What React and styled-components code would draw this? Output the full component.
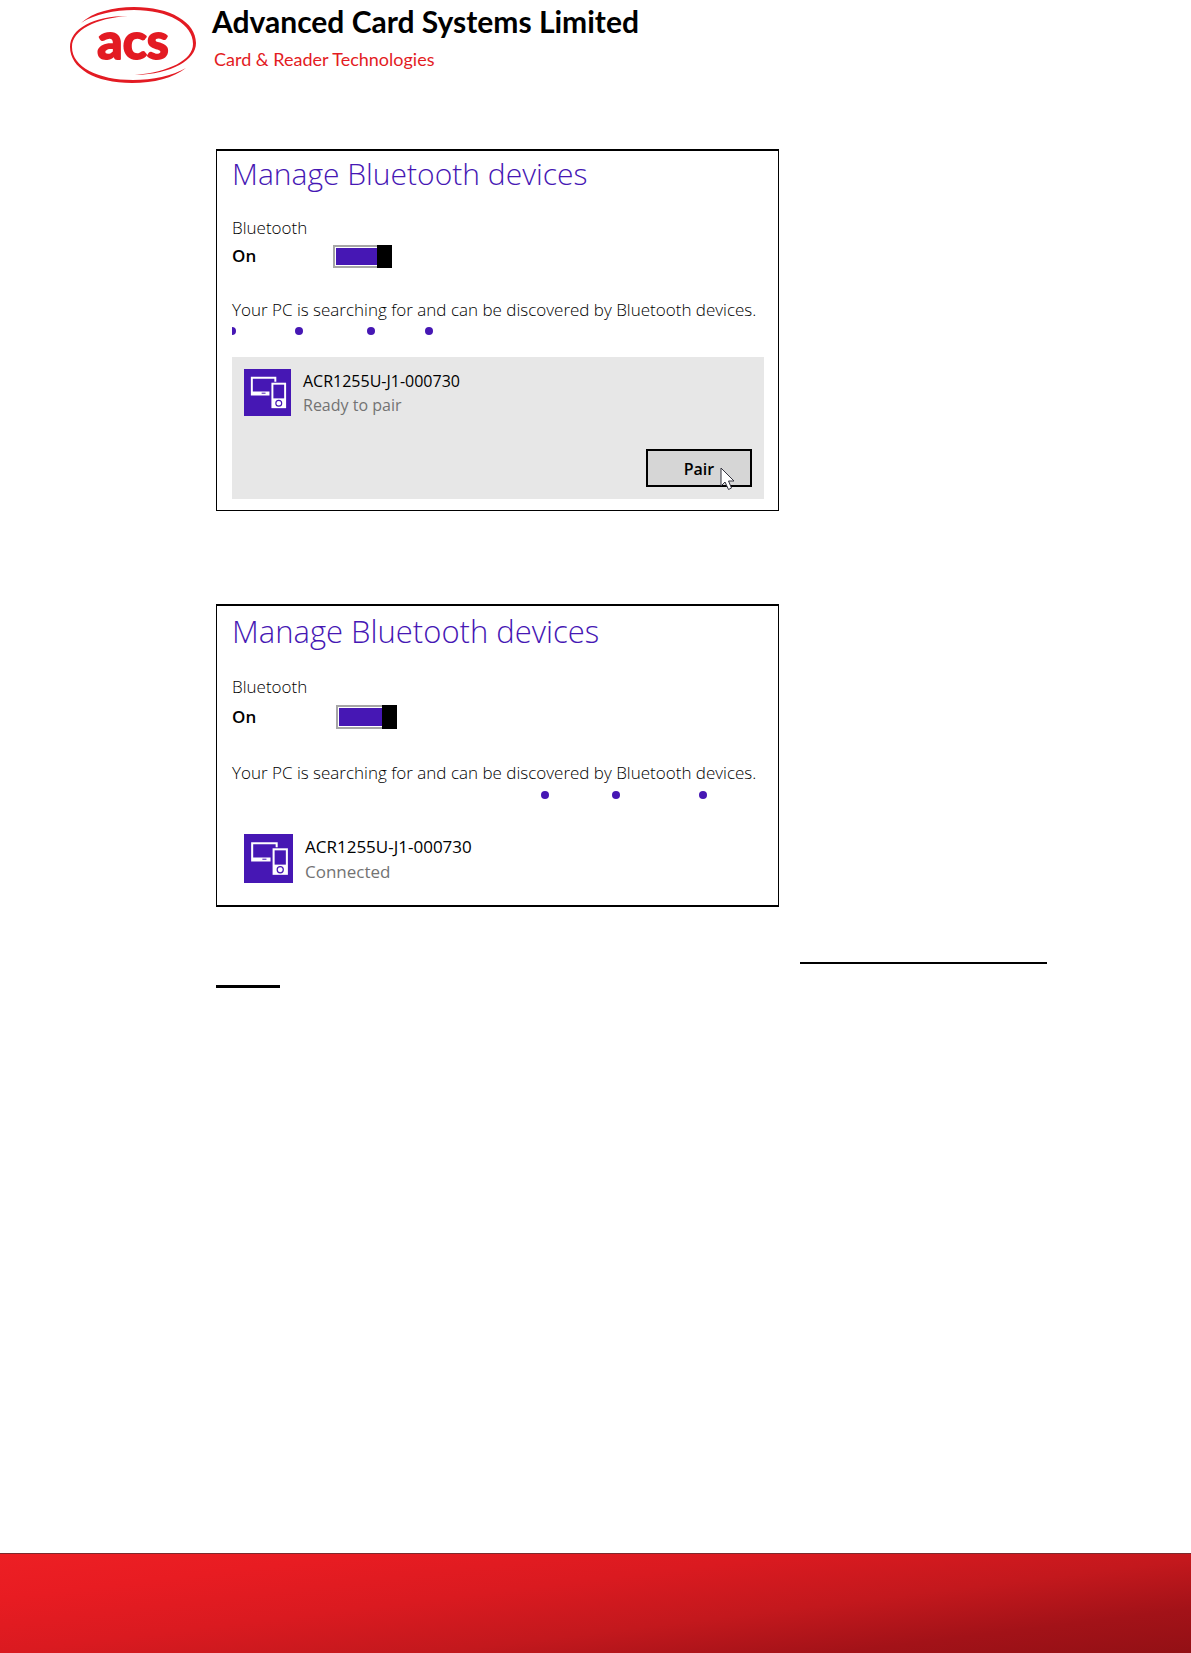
import React, { useState } from "react";
import styled, { createGlobalStyle } from "styled-components";

const GlobalStyle = createGlobalStyle`
  * {
    box-sizing: border-box;
  }
  body {
    margin: 0;
    background: #ffffff;
    font-family: "Open Sans", "Noto Sans", sans-serif;
  }
`;

const Page = styled.div`
  display: flex;
  flex-direction: column;
  min-height: 100vh;
`;

const Header = styled.header`
  display: flex;
  gap: 16px;
  height: 149px;
  padding-left: 68px;
`;

const Logo = styled.svg`
  flex: none;
  width: 128px;
  height: 90px;
`;

const LogoText = styled.text`
  font-family: Lato, sans-serif;
  font-size: 50px;
  font-weight: bold;
`;

const Company = styled.div`
  display: flex;
  flex-direction: column;
`;

const CompanyName = styled.h1`
  margin: 0;
  font-family: Lato, sans-serif;
  font-size: 30px;
  line-height: 42px;
  font-weight: bold;
  color: #000000;
`;

const Tagline = styled.p`
  margin: 0;
  padding: 5px 0 0 2px;
  font-family: Lato, sans-serif;
  font-size: 18px;
  line-height: 24px;
  color: #e31b23;
`;

const Content = styled.main`
  display: flex;
  flex-direction: column;
  padding: 0 144px 0 216px;
`;

const Panel = styled.section`
  width: 100%;
  max-width: 563px;
  padding: 0 14px ${(props) => (props.$large ? 9 : 11)}px 15px;
  border: 1px solid #000000;
  border-top-width: 2px;
  border-bottom-width: ${(props) => (props.$large ? 2 : 1)}px;
  font-size: 17px;
  line-height: ${(props) => (props.$large ? 30 : 28)}px;
  font-weight: 300;
  white-space: nowrap;
  color: #000000;

  & + & {
    margin-top: 93px;
  }
`;

const PanelTitle = styled.h2`
  margin: 0 0 ${(props) => (props.$large ? 16 : 17)}px;
  font-size: ${(props) => (props.$large ? 31 : 30)}px;
  line-height: ${(props) => (props.$large ? 50 : 46)}px;
  font-weight: 300;
  color: #4617b4;
`;

const SwitchLabel = styled.label`
  display: block;
`;

const SwitchRow = styled.div`
  display: flex;
  align-items: center;
`;

const SwitchState = styled.span`
  width: ${(props) => (props.$large ? 104 : 101)}px;
  font-weight: 600;
`;

const Switch = styled.input`
  appearance: none;
  display: flex;
  justify-content: flex-end;
  width: ${(props) => (props.$large ? 61 : 59)}px;
  height: ${(props) => (props.$large ? 24 : 23)}px;
  margin: 0;
  border: 2px solid #a6a6a6;
  border-right: 0;
  background: #a6a6a6;
  box-shadow: inset 0 0 0 1px #ffffff;
  cursor: pointer;

  &:checked {
    background: #4617b4;
  }

  &::after {
    content: "";
    width: 15px;
    margin: -2px 0;
    background: #000000;
  }

  &:not(:checked) {
    justify-content: flex-start;
  }
`;

const Status = styled.p`
  margin: 26px 0 0;
`;

const Progress = styled.svg`
  display: block;
  width: 100%;
  height: 14px;
  fill: #4617b4;
`;

const Device = styled.div`
  display: flex;
  flex-direction: column;
  gap: 32px;
  margin-top: ${(props) => (props.$selected ? 19 : 20)}px;
  padding: 12px;
  background: ${(props) => (props.$selected ? "#e7e7e7" : "transparent")};
`;

const DeviceInfo = styled.div`
  display: flex;
  gap: 12px;
  font-size: ${(props) => (props.$large ? 17 : 16)}px;
  line-height: ${(props) => (props.$large ? 25 : 24)}px;
`;

const DeviceIcon = styled.svg`
  flex: none;
  width: ${(props) => (props.$large ? 49 : 47)}px;
  height: ${(props) => (props.$large ? 49 : 47)}px;
`;

const DeviceName = styled.div`
  font-weight: 400;
`;

const DeviceState = styled.div`
  font-weight: 400;
  color: #737373;
`;

const PairButton = styled.button`
  position: relative;
  align-self: flex-end;
  width: 106px;
  height: 38px;
  padding: 2px 0 0;
  border: 2px solid #000000;
  background: #d6d6d6;
  font-family: inherit;
  font-size: 16px;
  font-weight: 600;
  color: #000000;
  cursor: pointer;
`;

const Pointer = styled.svg`
  position: absolute;
  left: 72px;
  top: 16px;
  width: 15px;
  height: 24px;
`;

const Rules = styled.div`
  display: flex;
  flex-direction: column;
  gap: 21px;
  padding: 55px 0 60px;
`;

const Rule = styled.span`
  width: ${(props) => (props.$end ? 247 : 64)}px;
  height: ${(props) => (props.$end ? 2 : 3)}px;
  align-self: ${(props) => (props.$end ? "flex-end" : "flex-start")};
  background: #000000;
`;

const Footer = styled.footer`
  height: 100px;
  margin-top: auto;
  border-top: 1px solid #7c2a2c;
  background: linear-gradient(
    173deg,
    #ed1f24 0%,
    #e81c22 18%,
    #da1a20 40%,
    #c3181d 62%,
    #a31218 82%,
    #931015 100%
  );
`;

const AcsLogo = () => (
  <Logo viewBox="0 0 128 90" role="img" aria-label="acs">
    <g fill="#e31b23">
      <path d="M13 23C25 12 45 7 66 7c36 0 62 15 62 36 0 17-24 31-61 32 34-3 58-15 58-31 0-20-25-34-59-34C46 10 27 14 13 23z" />
      <path d="M60 16C28 18 4 30 4 47c0 20 26 33 61 33 20 0 39-4 53-12-13 10-32 15-54 15C27 83 2 68 2 47 2 29 25 16 60 16z" />
    </g>
    <LogoText x="65" y="59" textAnchor="middle" fill="#e31b23" stroke="#e31b23" strokeWidth="2" strokeLinejoin="round">
      acs
    </LogoText>
  </Logo>
);

const DevicesIcon = ({ large }) => (
  <DeviceIcon $large={large} viewBox="0 0 48 48" aria-hidden="true">
    <path fill="#4617b4" d="M0 0h48v48H0z" />
    <path fill="#ffffff" d="M7 8h26v5h-2v-3H9v13h17v4H7z" />
    <path fill="#4617b4" d="M18 24.200h4v1h-4z" />
    <path fill="#ffffff" d="M28 14h15v26H28z" />
    <path fill="#4617b4" d="M30 16h11v14H30z" />
    <circle cx="35.500" cy="35" r="3" fill="none" stroke="#4617b4" strokeWidth="1.200" />
  </DeviceIcon>
);

const BluetoothPanel = ({ id, large, dots, device, state, canPair }) => {
  const [enabled, setEnabled] = useState(true);

  return (
    <Panel $large={large}>
      <PanelTitle $large={large}>Manage Bluetooth devices</PanelTitle>
      <SwitchLabel htmlFor={id}>Bluetooth</SwitchLabel>
      <SwitchRow>
        <SwitchState $large={large}>{enabled ? "On" : "Off"}</SwitchState>
        <Switch
          $large={large}
          id={id}
          type="checkbox"
          role="switch"
          checked={enabled}
          onChange={(e) => setEnabled(e.target.checked)}
        />
      </SwitchRow>
      <Status>
        Your PC is searching for and can be discovered by Bluetooth devices.
      </Status>
      <Progress aria-hidden="true">
        {dots.map((x) => (
          <circle key={x} cx={x} cy="7" r="4" />
        ))}
      </Progress>
      <Device $selected={canPair}>
        <DeviceInfo $large={large}>
          <DevicesIcon large={large} />
          <div>
            <DeviceName>{device}</DeviceName>
            <DeviceState>{state}</DeviceState>
          </div>
        </DeviceInfo>
        {canPair && (
          <PairButton type="button">
            Pair
            <Pointer viewBox="0 0 15 24" aria-hidden="true">
              <path
                d="M1 1v18l4-4 3.500 7.500 3-1.500L8.500 14H14z"
                fill="#ffffff"
                stroke="#33333f"
              />
            </Pointer>
          </PairButton>
        )}
      </Device>
    </Panel>
  );
};

const App = () => {
  return (
    <>
      <GlobalStyle />
      <Page>
        <Header>
          <AcsLogo />
          <Company>
            <CompanyName>Advanced Card Systems Limited</CompanyName>
            <Tagline>Card &amp; Reader Technologies</Tagline>
          </Company>
        </Header>
        <Content>
          <BluetoothPanel
            id="bluetooth-pairing"
            dots={[0, 67, 139, 197]}
            device="ACR1255U-J1-000730"
            state="Ready to pair"
            canPair
          />
          <BluetoothPanel
            id="bluetooth-connected"
            large
            dots={[313, 384, 471]}
            device="ACR1255U-J1-000730"
            state="Connected"
          />
          <Rules>
            <Rule $end />
            <Rule />
          </Rules>
        </Content>
        <Footer />
      </Page>
    </>
  );
};

export default App;
